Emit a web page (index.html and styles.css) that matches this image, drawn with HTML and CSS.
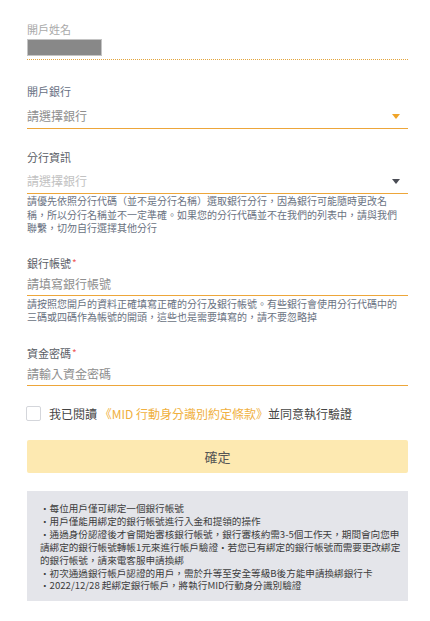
FILE: index.html
```html
<!DOCTYPE html>
<html lang="zh-Hant">
<head>
<meta charset="utf-8">
<link rel="stylesheet" href="styles.css">
</head>
<body>
<div class="page">
  <div class="field field-name">
    <div class="label label-light">開戶姓名</div>
    <div class="name-box"><div class="masked"></div></div>
  </div>

  <div class="field field-bank">
    <div class="label label-slate">開戶銀行</div>
    <div class="select">
      <span class="value">請選擇銀行</span>
      <svg class="caret" width="8" height="5" viewBox="0 0 8 5"><path d="M0 0H8L4 5Z" fill="#f0a428"/></svg>
    </div>
  </div>

  <div class="field field-branch">
    <div class="label">分行資訊</div>
    <div class="select">
      <span class="value placeholder">請選擇銀行</span>
      <svg class="caret" width="8" height="5" viewBox="0 0 8 5"><path d="M0 0H8L4 5Z" fill="#4a4d55"/></svg>
    </div>
    <p class="help">請優先依照分行代碼（並不是分行名稱）選取銀行分行，因為銀行可能隨時更改名<br>稱，所以分行名稱並不一定準確。如果您的分行代碼並不在我們的列表中，請與我們<br>聯繫，切勿自行選擇其他分行</p>
  </div>

  <div class="field field-account">
    <div class="label">銀行帳號<span class="req">*</span></div>
    <div class="input"><span class="value">請填寫銀行帳號</span></div>
    <p class="help help-tight">請按照您開戶的資料正確填寫正確的分行及銀行帳號。有些銀行會使用分行代碼中的<br>三碼或四碼作為帳號的開頭，這些也是需要填寫的，請不要忽略掉</p>
  </div>

  <div class="field field-pass">
    <div class="label">資金密碼<span class="req">*</span></div>
    <div class="input"><span class="value">請輸入資金密碼</span></div>
  </div>

  <label class="agree">
    <span class="checkbox"></span>
    <span class="agree-text">我已閱讀 <span class="link">《MID 行動身分識別約定條款》</span>並同意執行驗證</span>
  </label>

  <button class="submit">確定</button>

  <div class="notes">
    <div class="note">・每位用戶僅可綁定一個銀行帳號</div>
    <div class="note">・用戶僅能用綁定的銀行帳號進行入金和提領的操作</div>
    <div class="note">・通過身份認證後才會開始審核銀行帳號，銀行審核約需3-5個工作天，期間會向您申<br>請綁定的銀行帳號轉帳1元來進行帳戶驗證・若您已有綁定的銀行帳號而需要更改綁定<br>的銀行帳號，請來電客服申請換綁</div>
    <div class="note">・初次通過銀行帳戶認證的用戶，需於升等至安全等級B後方能申請換綁銀行卡</div>
    <div class="note">・2022/12/28 起綁定銀行帳戶，將執行MID行動身分識別驗證</div>
  </div>
</div>
</body>
</html>
```

FILE: styles.css
```css
* { box-sizing: border-box; }
html, body { margin: 0; padding: 0; background: #fff; }
body {
  font-family: "Noto Sans CJK TC", "Noto Sans", sans-serif;
  color: #555;
}
.page {
  width: 430px;
  padding: 22px 22px 0 27px;
}
.label {
  font-size: 11px;
  line-height: 14px;
  color: #5a5e66;
}
.label-light { color: #a9a9a9; }
.label-slate { color: #687184; }
.req { color: #ef5a5a; margin-left: 1px; font-size: 10px; vertical-align: top; }

.name-box {
  margin-top: 3px;
  padding-bottom: 3px;
  border-bottom: 1px dotted #e3a43a;
}
.masked {
  width: 75px;
  height: 17px;
  background: #888;
  border: 1px solid #c4c4c4;
}

.field-bank { margin-top: 24px; }
.field-branch { margin-top: 21px; }
.field-account { margin-top: 21px; }
.field-pass { margin-top: 22px; }

.select {
  display: flex;
  align-items: center;
  justify-content: space-between;
  margin-top: 10px;
  padding: 0 8px 4px 0;
  border-bottom: 1px solid #eda63a;
}
.field-branch .select { margin-top: 9px; }
.value {
  font-size: 12px;
  line-height: 16px;
  color: #8e8e8e;
}
.placeholder { color: #c2c2c2; }
.caret { display: block; }

.input {
  margin-top: 0;
  padding-bottom: 1px;
  border-bottom: 1px solid #eda63a;
}

.help {
  margin: 0;
  font-size: 10px;
  line-height: 13.5px;
  color: #6a7282;
}
.help-tight { margin-top: 1px; }

.agree {
  display: flex;
  align-items: center;
  margin-top: 20px;
  height: 16px;
}
.checkbox {
  width: 15px;
  height: 15px;
  margin-left: -1px;
  border: 1.5px solid #d4d6db;
  border-radius: 2px;
  background: #fff;
}
.agree-text {
  margin-left: 8px;
  font-size: 12px;
  line-height: 16px;
  color: #444;
}
.link { color: #f0b040; }

.submit {
  display: block;
  width: 381px;
  height: 33px;
  margin: 18px 0 0;
  padding: 0;
  border: none;
  border-radius: 2px;
  background: #fde9b1;
  font-family: inherit;
  font-size: 13px;
  color: #555;
}

.notes {
  margin-top: 18px;
  padding: 11.5px 10px 9px 13px;
  background: #e4e5ea;
  font-size: 9.6px;
  line-height: 12.9px;
  color: #3c3c3c;
}
.note { white-space: nowrap; }
```
